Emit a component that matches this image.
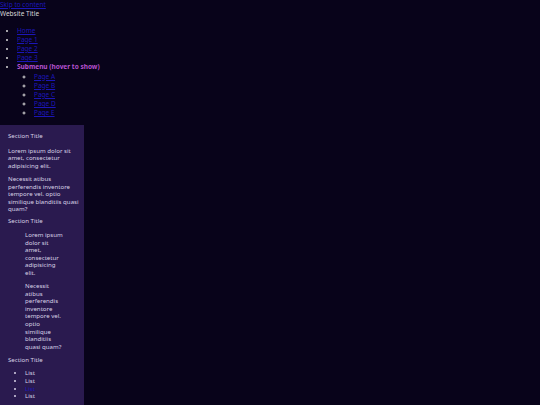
import React from "react";

function Lines({ lines }: { lines: string[] }) {
  return (
    <>
      {lines.map((l, i) => (
        <span key={i} className="block whitespace-nowrap">{l}</span>
      ))}
    </>
  );
}

export default function App() {
  const sub = ["Page A", "Page B", "Page C", "Page D", "Page E"];
  return (
    <div className="min-h-[405px] w-[540px] bg-[#08031a] text-[#d6d0e0] overflow-hidden" style={{ fontFamily: "'Noto Sans', 'Open Sans', sans-serif" }}>
      <header className="text-[6.5px] leading-[9px] text-[#d8d8d8]">
        <a href="#" className="block text-[#1c16b8] underline">Skip to content</a>
        <div>Website Title</div>
      </header>
      <nav className="text-[6.5px] leading-[9.2px]">
        <ul className="list-disc pl-[17px] my-[7.5px] marker:text-[#d8d8d8]">
          <li><a href="#" className="text-[#1c16b8] underline">Home</a></li>
          <li><a href="#" className="text-[#1c16b8] underline">Page 1</a></li>
          <li><a href="#" className="text-[#1c16b8] underline">Page 2</a></li>
          <li><a href="#" className="text-[#1c16b8] underline">Page 3</a></li>
          <li>
            <span className="font-bold text-[#b552d0]">Submenu (hover to show)</span>
            <ul className="list-[circle] pl-[17px]">
              {sub.map((s) => (
                <li key={s}><a href="#" className="text-[#1c16b8] underline">{s}</a></li>
              ))}
            </ul>
          </li>
        </ul>
      </nav>
      <aside className="w-[84px] min-h-[280px] bg-[#2a1a4f] px-[8px] pt-[6.5px] pb-[8px] text-[6.1px] leading-[7.6px] text-[#d8d2e6]">
        <div>Section Title</div>
        <p className="mt-[7.5px]"><Lines lines={["Lorem ipsum dolor sit", "amet, consectetur", "adipisicing elit."]} /></p>
        <p className="mt-[5.5px]"><Lines lines={["Necessit atibus", "perferendis inventore", "tempore vel. optio", "similique blanditiis quasi", "quam?"]} /></p>
        <div className="mt-[4.5px]">Section Title</div>
        <blockquote className="ml-[17px] mr-[14px] mt-[6px]">
          <p><Lines lines={["Lorem ipsum", "dolor sit", "amet,", "consectetur", "adipisicing", "elit."]} /></p>
          <p className="mt-[5.5px]"><Lines lines={["Necessit", "atibus", "perferendis", "inventore", "tempore vel.", "optio", "similique", "blanditiis", "quasi quam?"]} /></p>
        </blockquote>
        <div className="mt-[6px]">Section Title</div>
        <ul className="list-disc pl-[17px] mt-[5.5px]">
          <li>List</li>
          <li>List</li>
          <li><a href="#" className="text-[#1c16b8]">List</a></li>
          <li>List</li>
        </ul>
      </aside>
    </div>
  );
}
